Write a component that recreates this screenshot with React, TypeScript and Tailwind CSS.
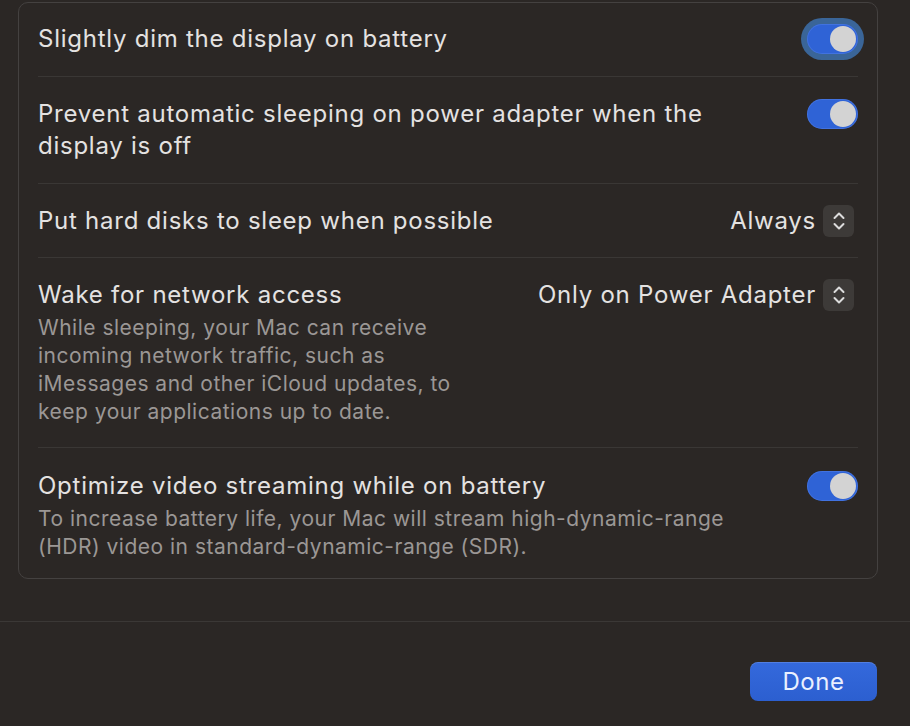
import React from 'react';

type Row = {
  title: string;
  desc?: string;
  control: 'toggle' | 'toggle-focus' | 'popup';
  value?: string;
  descWidth?: string;
};

const rows: Row[] = [
  { title: 'Slightly dim the display on battery', control: 'toggle-focus' },
  { title: 'Prevent automatic sleeping on power adapter when the display is off', control: 'toggle' },
  { title: 'Put hard disks to sleep when possible', control: 'popup', value: 'Always' },
  {
    title: 'Wake for network access',
    desc: 'While sleeping, your Mac can receive incoming network traffic, such as iMessages and other iCloud updates, to keep your applications up to date.',
    control: 'popup',
    value: 'Only on Power Adapter',
    descWidth: 'max-w-[440px]',
  },
  {
    title: 'Optimize video streaming while on battery',
    desc: 'To increase battery life, your Mac will stream high-dynamic-range (HDR) video in standard-dynamic-range (SDR).',
    control: 'toggle',
    descWidth: 'max-w-[720px]',
  },
];

function Toggle({ focused }: { focused?: boolean }) {
  const track = (
    <div className="flex h-[30px] w-[51px] items-center justify-end rounded-full bg-[#2f63d6] pr-[2px] shadow-[inset_0_0_0_1px_rgba(120,160,255,0.25)]">
      <div className="h-[26px] w-[26px] rounded-full bg-[#d3d3d3]" />
    </div>
  );
  if (!focused) return track;
  return (
    <div className="-m-[6px] rounded-full bg-[#3a6598] p-[6px]">{track}</div>
  );
}

function Stepper() {
  return (
    <div className="flex h-[32px] w-[31px] items-center justify-center rounded-[6px] bg-[#3d3a38]">
      <svg width="14" height="22" viewBox="0 0 14 22" fill="none">
        <path d="M2.5 8 L7 3.5 L11.5 8" stroke="#dcdcdc" strokeWidth="2" strokeLinecap="round" strokeLinejoin="round" />
        <path d="M2.5 14 L7 18.5 L11.5 14" stroke="#dcdcdc" strokeWidth="2" strokeLinecap="round" strokeLinejoin="round" />
      </svg>
    </div>
  );
}

function SettingRow({ row, index, last }: { row: Row; index: number; last: boolean }) {
  const pad =
    index === 0
      ? 'pt-[20px] pb-[21px]'
      : index === 2
        ? 'pt-[21px] pb-[20px]'
        : last
          ? 'pt-[22px] pb-[17px]'
          : 'py-[21px]';
  return (
    <div className={`flex items-start gap-6 ${pad} ${last ? '' : 'border-b border-[#3a3735]'}`}>
      <div className="min-w-0 flex-1 pr-[40px]">
        <div className="text-[24px] leading-[32px] tracking-[0.75px] text-[#e4e2e1]">{row.title}</div>
        {row.desc && (
          <div className={`mt-[3px] text-[21px] leading-[28px] tracking-[0.5px] text-[#9b9795] ${row.descWidth ?? ''}`}>
            {row.desc}
          </div>
        )}
      </div>
      {row.control === 'popup' ? (
        <div className="mr-[4px] flex h-[32px] items-center gap-[7px]">
          <span className="whitespace-nowrap text-[24px] leading-[32px] tracking-[0.75px] text-[#e4e2e1]">{row.value}</span>
          <Stepper />
        </div>
      ) : (
        <div className="flex h-[32px] items-center">
          <Toggle focused={row.control === 'toggle-focus'} />
        </div>
      )}
    </div>
  );
}

export default function App() {
  return (
    <div
      className="flex h-[726px] w-[910px] flex-col overflow-hidden bg-[#2b2725]"
      style={{ fontFamily: 'Inter, "Noto Sans", sans-serif' }}
    >
      <div className="pl-[18px] pt-[2px]">
        <div className="w-[860px] rounded-[10px] border border-[#444140] px-[19px]">
          {rows.map((row, i) => (
            <SettingRow key={row.title} row={row} index={i} last={i === rows.length - 1} />
          ))}
        </div>
      </div>

      <div className="mt-[42px] border-t border-[#3b3836]" />

      <div className="flex justify-end pr-[33px] pt-[40px]">
        <button className="h-[39px] w-[127px] rounded-[8px] bg-gradient-to-b from-[#3469dc] to-[#2c5fd0] text-[24px] tracking-[0.5px] text-[#eaf0ff] shadow-[inset_0_1px_0_rgba(255,255,255,0.15)]">
          Done
        </button>
      </div>
    </div>
  );
}
